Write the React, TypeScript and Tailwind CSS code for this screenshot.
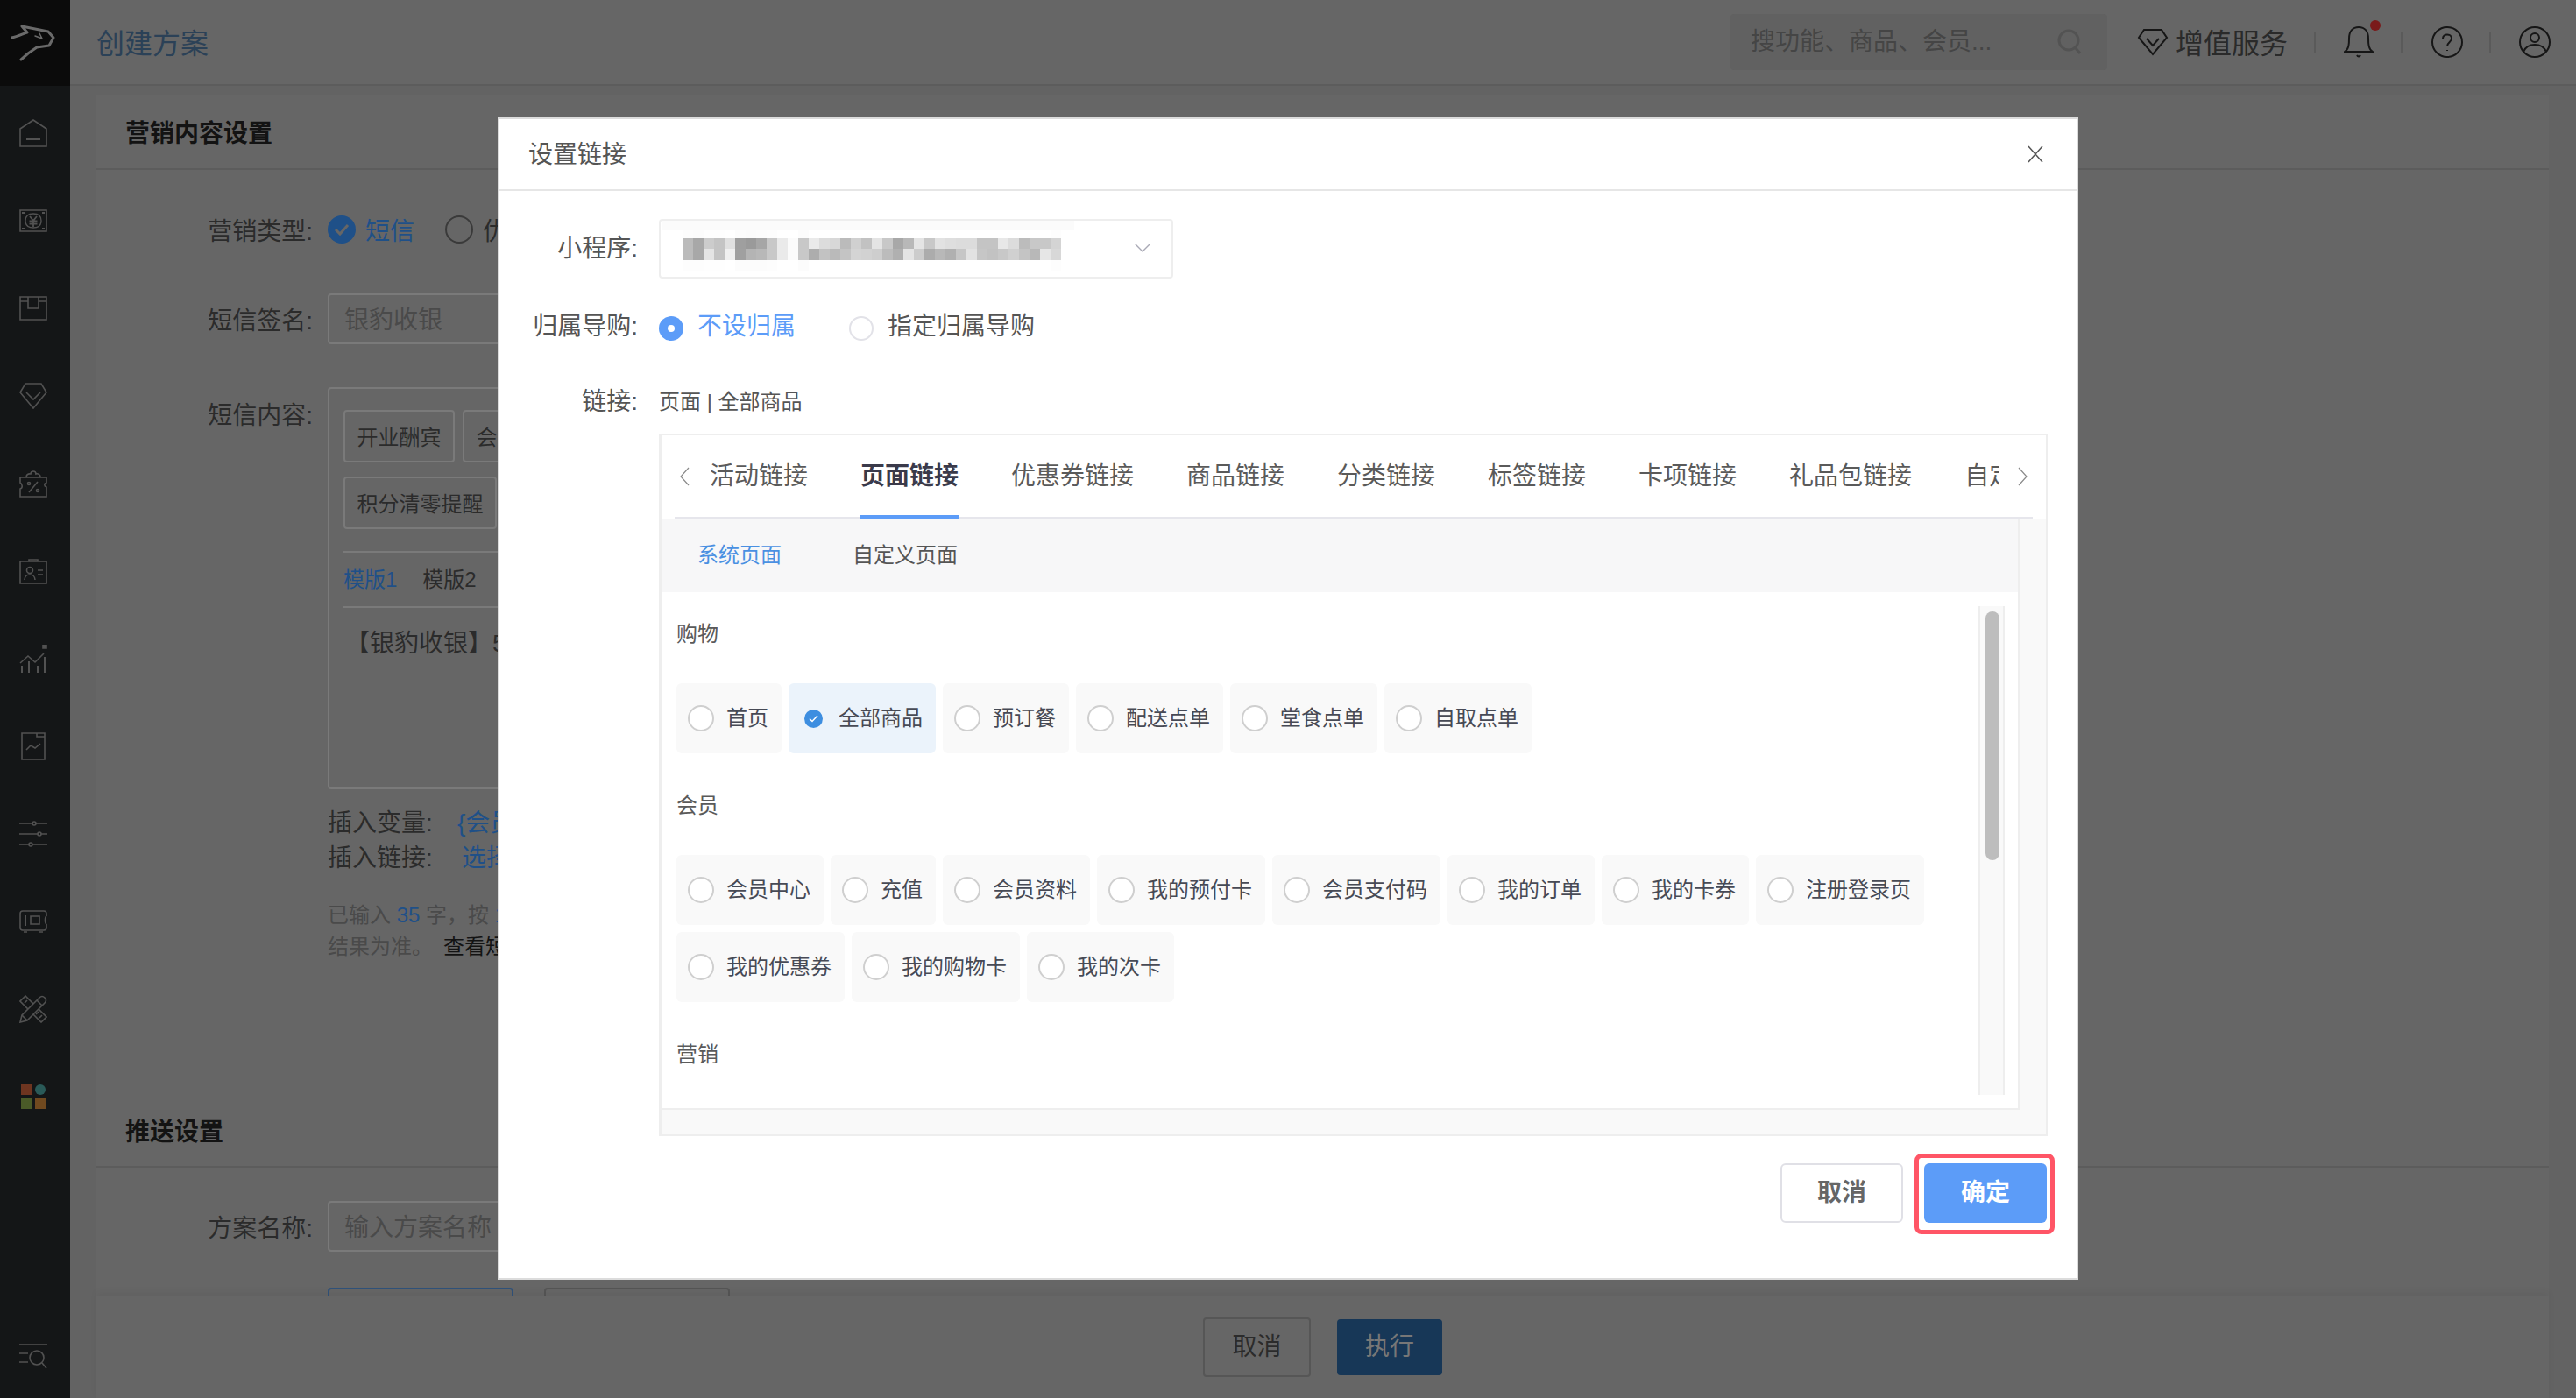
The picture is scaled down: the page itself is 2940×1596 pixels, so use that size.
import { ChevronDown } from "lucide-react"
import type { ReactNode } from "react"

const tabs = ["活动链接", "页面链接", "优惠券链接", "商品链接", "分类链接", "标签链接", "卡项链接", "礼品包链接", "自定义链接"]

const groups = [
  { title: "购物", items: ["首页", "全部商品", "预订餐", "配送点单", "堂食点单", "自取点单"] },
  { title: "会员", items: ["会员中心", "充值", "会员资料", "我的预付卡", "会员支付码", "我的订单", "我的卡券", "注册登录页", "我的优惠券", "我的购物卡", "我的次卡"] },
  { title: "营销", items: [] as string[] },
]

// the name in the select is pixelated in the picture
const mosaic = [
  "#fdfdfd #fcfcfc #fefefe #fefefe #fff #fcfcfc #fbfbfb #fcfcfc #fdfdfd #fff #fff #fcfcfc #fff #fff #fff #fff #fff #fff #fff #fff #fff #fff #fff #fff #fff #fff #fff #fff #fff #fff #fff #fff #fff #fff #fff #fdfdfd",
  "#bbb #a8a8a8 #ccc #c4c4c4 #e0e0e0 #9f9f9f #9a9a9a #a6a6a6 #c8c8c8 #eaeaea #fbfbfb #c8c8c8 #eaeaea #dcdcdc #d8d8d8 #bbb #d0d0d0 #c2c2c2 #e4e4e4 #c8c8c8 #a8a8a8 #b8b8b8 #e4e4e4 #c8c8c8 #e2e2e2 #dedede #dcdcdc #dcdcdc #c4c4c4 #c4c4c4 #e8e8e8 #dcdcdc #bcbcbc #c8c8c8 #c8c8c8 #d4d4d4",
  "#bbb #a8a8a8 #e4e4e4 #c4c4c4 #f0f0f0 #a0a0a0 #b4b4b4 #b8b8b8 #c8c8c8 #eaeaea #fbfbfb #c8c8c8 #adadad #c2c2c2 #bababa #c4c4c4 #d4d4d4 #d2d2d2 #cecece #bcbcbc #b0b0b0 #e4e4e4 #cccccc #acacac #b8b8b8 #b0b0b0 #c6c6c6 #e2e2e2 #c6c6c6 #c2c2c2 #c8c8c8 #d0d0d0 #c4c4c4 #b8b8b8 #e6e6e6 #d8d8d8",
  "#fdfdfd #fdfdfd #fefefe #fefefe #fff #fcfcfc #fcfcfc #fcfcfc #fdfdfd #fff #fff #fcfcfc #fff #fff #fff #fff #fff #fff #fff #fff #fff #fff #fff #fff #fff #fff #fff #fff #fff #fff #fff #fff #fff #fff #fff #fdfdfd",
]

function SideIcon({ h = 32, children }: { h?: number; children: ReactNode }) {
  return (
    <svg width="32" height={h} viewBox={`0 0 32 ${h}`} fill="none" stroke="#525252" strokeWidth="1.6">
      {children}
    </svg>
  )
}

const sideIcons: ReactNode[] = [
  <SideIcon>
    <path d="M1 31V11L16 1L31 11V31Z" />
    <path d="M8 23H24" strokeWidth="2" />
  </SideIcon>,
  <SideIcon h={26}>
    <path d="M1 1H31V25H1Z" />
    <path d="M3 4H6M26 4H29M3 22H6M26 22H29" strokeWidth="2" />
    <path d="M7 13C7 8 10 5 16 5C22 5 25 8 25 13C25 18 22 21 16 21C10 21 7 18 7 13Z" strokeWidth="1.4" />
    <path d="M12 8L16 13L20 8M16 13V20M11.500 13.500H20.500M11.500 16.500H20.500" strokeWidth="1.8" />
  </SideIcon>,
  <SideIcon h={28}>
    <path d="M1 1H31V27H1Z" />
    <path d="M1 6H10M22 6H31M10 1V14H22V1" />
  </SideIcon>,
  <SideIcon h={30}>
    <path d="M7 1H25L31 11L16 29L1 11Z" />
    <path d="M8 11L16 19L24 11" />
  </SideIcon>,
  <SideIcon>
    <path d="M1 9H31V15C28 16 28 19 31 20V31H1V22C4 21 4 17 1 15Z" />
    <path d="M8 8C9 4 12 5 13 5C13 1 19 1 19 5C21 4 24 6 24 8" />
    <path d="M11 26L21 14" />
    <circle cx="11" cy="16" r="1.500" />
    <circle cx="21" cy="24" r="1.500" />
  </SideIcon>,
  <SideIcon h={29}>
    <path d="M1 3H31V28H1Z" />
    <path d="M11 3V1H21V3" />
    <circle cx="12" cy="13" r="3.500" />
    <path d="M6 24C6 20 9 18 12 18C15 18 18 20 18 24M21 13H27M21 18H27" />
  </SideIcon>,
  <SideIcon h={33}>
    <path d="M1 21L10 13L18 20L28 10" />
    <path d="M3 32V24M11 32V19M21 32V24M29 32V14" strokeWidth="2" />
    <path d="M27 0H31V4H27Z" fill="#525252" />
  </SideIcon>,
  <SideIcon>
    <path d="M3 1H20L29 1V31H3Z" />
    <path d="M20 1V5H29" />
    <path d="M8 20L13 15L18 18L24 13" />
  </SideIcon>,
  <SideIcon h={30}>
    <path d="M0 3H32M0 15H32M0 27H32" strokeWidth="1.4" />
    <circle cx="17" cy="3" r="2" fill="#141617" />
    <circle cx="23" cy="15" r="2" fill="#141617" />
    <circle cx="13" cy="27" r="2" fill="#141617" />
  </SideIcon>,
  <SideIcon h={26}>
    <path d="M31 7V4C31 2 30 1 28 1H4C2 1 1 2 1 4V20C1 22 2 23 4 23H28C30 23 31 22 31 20V16M31 7C29 8 29 15 31 16" />
    <path d="M7 6V18" strokeWidth="2" />
    <path d="M13 7H23V16H13Z" />
    <path d="M5 25H9M23 25H27" />
  </SideIcon>,
  <SideIcon>
    <path d="M7 1L1 7L25 31L31 25Z" />
    <path d="M9 6L6 9M22 19L19 22M26 23L23 26" />
    <path d="M1 31L3 23L23 3C25 1 27 1 29 3C31 5 31 7 29 9L9 29Z" fill="#141617" />
    <path d="M3 23L9 29M20 6L26 12" />
  </SideIcon>,
]

function Label({ children, className }: { children: ReactNode; className?: string }) {
  return <div className={`w-[247px] shrink-0 text-right text-[#2b2b2b] ${className ?? ""}`}>{children}:</div>
}

function Background() {
  return (
    <div className="flex h-full w-full bg-[#636363]">
      <aside className="flex w-[80px] shrink-0 flex-col items-center bg-[#141617]">
        <div className="flex h-[98px] w-full items-center justify-center bg-[#0b0b0b] pr-[4px]">
          <svg width="52" height="42" viewBox="0 0 52 42" fill="none" stroke="#6a6a6a" strokeWidth="3" strokeLinejoin="round" strokeLinecap="round">
            <path d="M1 15C8 14 13 11 19 9L13 2L28 5L43 8L49 15L44 24L30 26L20 33L12 40" />
            <path d="M28 13L36 16L33 10" strokeWidth="1.5" />
          </svg>
        </div>
        <div className="flex flex-col items-center pr-[4px] pt-1">
          {sideIcons.map((icon, i) => (
            <div key={i} className="flex h-[100px] items-center justify-center">
              {icon}
            </div>
          ))}
          <div className="flex h-[100px] items-center justify-center">
            <div className="grid grid-cols-[12px_12px] gap-x-[4px] gap-y-[4px]">
              <div className="h-3 bg-[#6e3520]" />
              <div className="h-3 rounded-full bg-[#2a5a58]" />
              <div className="h-3 bg-[#4a5a28]" />
              <div className="h-3 bg-[#70491f]" />
            </div>
          </div>
        </div>
        <div className="mt-auto pb-[32px] pr-[4px]">
          <svg width="32" height="30" viewBox="0 0 32 30" fill="none" stroke="#525252" strokeWidth="1.6">
            <path d="M0 1H32M0 11H10M0 21H10" />
            <circle cx="20" cy="16" r="8" />
            <path d="M26 22L31 28" />
          </svg>
        </div>
      </aside>

      <div className="flex min-w-0 flex-1 flex-col">
        <header className="flex h-[98px] shrink-0 items-center border-b-2 border-[#5c5c5c] bg-[#666] pr-[29px]">
          <div className="ml-[30px] pt-[3px] text-[32px] text-[#2b4157]">创建方案</div>
          <div className="ml-auto flex h-[64px] w-[430px] items-center justify-between rounded bg-[#616161] pl-[23px] pr-[28px] text-[28px] text-[#454545]">
            <span>搜功能、商品、会员...</span>
            <svg width="30" height="32" viewBox="0 0 30 32" fill="none" stroke="#535353" strokeWidth="3">
              <circle cx="14" cy="14" r="11" />
              <path d="M22 23L27 29" />
            </svg>
          </div>
          <svg className="ml-[34px]" width="36" height="32" viewBox="0 0 36 32" fill="none" stroke="#161616" strokeWidth="2">
            <path d="M8 2H28L34 11L18 30L2 11Z" />
            <path d="M11 12L18 20L25 12" />
          </svg>
          <span className="ml-[8px] pt-[3px] text-[32px] text-[#2a2a2a]">增值服务</span>
          <div className="ml-[30px] h-[24px] w-[2px] bg-[#5a5a5a]" />
          <div className="relative ml-[32px] h-[36px] w-[34px]">
            <svg width="34" height="36" viewBox="0 0 34 36" fill="none" stroke="#161616" strokeWidth="2">
              <path d="M1 29H33C28 26 28 20 28 14C28 6 24 1 17 1C10 1 6 6 6 14C6 20 6 26 1 29Z" />
              <path d="M15 33C16 35 18 35 19 33" />
            </svg>
            <div className="absolute -right-[8px] -top-[7px] h-[12px] w-[12px] rounded-full bg-[#7a1a1a]" />
          </div>
          <div className="ml-[31px] h-[24px] w-[2px] bg-[#5a5a5a]" />
          <svg className="ml-[33px]" width="36" height="36" viewBox="0 0 36 36" fill="none" stroke="#161616" strokeWidth="2">
            <circle cx="18" cy="18" r="17" />
            <path d="M13 14C13 8 23 8 23 14C23 18 18 18 18 23" />
            <path d="M18 27V28" />
          </svg>
          <div className="ml-[30px] h-[24px] w-[2px] bg-[#5a5a5a]" />
          <svg className="ml-[32px]" width="36" height="36" viewBox="0 0 36 36" fill="none" stroke="#161616" strokeWidth="2">
            <circle cx="18" cy="18" r="17" />
            <circle cx="18" cy="13" r="5" />
            <path d="M5 29C8 22 13 21 18 21C23 21 28 22 31 29" />
          </svg>
        </header>

        <main className="relative ml-[30px] mr-[31px] flex min-h-0 flex-1 flex-col pt-[10px]">
          <div className="min-h-0 flex-1 overflow-hidden bg-[#666] text-[28px] text-[#2b2b2b]">
            <div className="flex h-[86px] items-center border-b-2 border-[#5c5c5c] pl-[33px] pt-[6px] font-bold text-[#131313]">营销内容设置</div>

            <div className="mt-[39px] flex h-[58px] items-center gap-[17px]">
              <Label className="pt-[6px]">营销类型</Label>
              <div className="flex h-[32px] w-[32px] items-center justify-center rounded-full bg-[#1f5088]">
                <svg width="20" height="16" viewBox="0 0 20 16" fill="none" stroke="#666" strokeWidth="3">
                  <path d="M3 8L8 13L17 3" />
                </svg>
              </div>
              <span className="-ml-[6px] pt-[6px] text-[#1f5088]">短信</span>
              <div className="ml-[18px] h-[32px] w-[32px] rounded-full border-2 border-[#3a3a3a]" />
              <span className="-ml-[6px] pt-[6px]">优惠券</span>
            </div>

            <div className="mt-[44px] flex h-[58px] items-center gap-[17px]">
              <Label className="pt-[6px]">短信签名</Label>
              <div className="flex h-full w-[500px] items-center rounded border-2 border-[#7a7a7a] px-[17px] pt-[4px] text-[#4a4a4a]">银豹收银</div>
            </div>

            <div className="mt-[49px] flex gap-[17px]">
              <Label className="pt-[3px] leading-[60px]">短信内容</Label>
              <div className="h-[459px] w-[700px] rounded border-2 border-[#7a7a7a] px-[16px] pt-[24px]">
                <div className="flex gap-[9px] text-[24px]">
                  <div className="flex h-[60px] w-[127px] items-center justify-center rounded border-2 border-[#7a7a7a] pt-[3px]">开业酬宾</div>
                  <div className="flex h-[60px] w-[127px] items-center justify-center rounded border-2 border-[#7a7a7a] pt-[3px]">会员关怀</div>
                </div>
                <div className="mt-[16px] flex h-[60px] w-[175px] items-center justify-center rounded border-2 border-[#7a7a7a] pt-[3px] text-[24px]">积分清零提醒</div>
                <div className="mt-[25px] flex h-[65px] items-center gap-[29px] border-y-2 border-[#7a7a7a] text-[24px]">
                  <span className="text-[#1f5088]">模版1</span>
                  <span>模版2</span>
                </div>
                <div className="mt-[20px] whitespace-nowrap pl-[2px]">【银豹收银】5周年庆</div>
              </div>
            </div>

            <div className="ml-[264px] mt-[19px] leading-[40px]">
              <div className="flex">
                <span className="w-[148px]">插入变量:</span>
                <span className="text-[#1f5088]">{"{会员姓名}"}</span>
              </div>
              <div className="flex">
                <span className="w-[153px]">插入链接:</span>
                <span className="text-[#1f5088]">选择链接</span>
              </div>
            </div>
            <div className="ml-[264px] mt-[27px] text-[24px] leading-[36px] text-[#4a4a4a]">
              <div>
                已输入 <span className="text-[#1f5088]">35</span> 字，按 <span className="text-[#1f5088]">1</span>
              </div>
              <div>
                结果为准。<span className="ml-[12px] text-[#131313]">查看短信</span>
              </div>
            </div>

            <div className="mt-[150px] flex h-[84px] items-center border-b-2 border-[#5c5c5c] pl-[33px] pt-[5px] font-bold text-[#131313]">推送设置</div>
            <div className="mt-[38px] flex h-[58px] items-center gap-[17px]">
              <Label className="pt-[6px]">方案名称</Label>
              <div className="flex h-full w-[500px] items-center rounded border-2 border-[#7a7a7a] px-[17px] pt-[4px] text-[#4a4a4a]">输入方案名称</div>
            </div>
            <div className="ml-[264px] mt-[41px] flex gap-[35px]">
              <div className="h-[58px] w-[212px] rounded border-2 border-[#30527a]" />
              <div className="h-[58px] w-[212px] rounded border-2 border-[#555]" />
            </div>
          </div>
          <div className="flex h-[117px] shrink-0 items-center justify-center gap-[30px] bg-[#666] text-[28px] shadow-[0_-4px_8px_rgba(0,0,0,0.05)]">
            <div className="flex h-[68px] w-[123px] items-center justify-center rounded border-2 border-[#565656] text-[#2b2b2b]">取消</div>
            <div className="flex h-[64px] w-[120px] items-center justify-center rounded bg-[#173757] text-[#777]">执行</div>
          </div>
        </main>
      </div>
    </div>
  )
}

function Radio({ checked }: { checked: boolean }) {
  if (checked) {
    return (
      <div className="flex h-[30px] w-[30px] shrink-0 items-center justify-center">
        <div className="flex h-[21px] w-[21px] items-center justify-center rounded-full bg-[#3d8ee0]">
          <svg width="13" height="11" viewBox="0 0 13 11" fill="none" stroke="#fff" strokeWidth="1.500">
            <path d="M2 5.500L5 8.500L11 2" />
          </svg>
        </div>
      </div>
    )
  }
  return <div className="h-[30px] w-[30px] shrink-0 rounded-full border-2 border-[#cfcfcf] bg-white" />
}

function PageOption({ name, checked }: { name: string; checked: boolean }) {
  return (
    <div className={`flex h-20 items-center gap-[14px] rounded-md pl-[13px] pr-[15px] text-[24px] text-[#474a55] ${checked ? "bg-[#ebf3fb]" : "bg-[#f9f9f9]"}`}>
      <Radio checked={checked} />
      <span>{name}</span>
    </div>
  )
}

function FieldLabel({ children }: { children: ReactNode }) {
  return <div className="w-[158px] shrink-0 text-right text-[#555]">{children}:</div>
}

function Chevron({ dir }: { dir: "left" | "right" }) {
  return (
    <svg width="11" height="22" viewBox="0 0 11 22" fill="none" stroke="#8a8a8a" strokeWidth="1.200">
      <path d={dir === "left" ? "M10 1L1 11L10 21" : "M1 1L10 11L1 21"} />
    </svg>
  )
}

function LinkDialog() {
  return (
    <div className="flex h-[1327px] w-[1804px] flex-col border-2 border-[#dcdcdc] bg-white text-[28px] text-[#555]">
      <div className="flex h-[82px] shrink-0 items-center justify-between border-b-2 border-[#e6e6e6] pl-[33px] pr-[38px]">
        <span className="pt-[2px]">设置链接</span>
        <svg width="18" height="20" viewBox="0 0 18 20" fill="none" stroke="#555" strokeWidth="1.500">
          <path d="M1 1L17 19M17 1L1 19" />
        </svg>
      </div>

      <div className="mt-[32px] flex h-[68px] items-center gap-[24px]">
        <FieldLabel>小程序</FieldLabel>
        <div className="relative flex h-full w-[587px] items-center rounded border-2 border-[#eee] pl-[25px]">
          <div className="absolute left-[2px] top-0 h-[11px] w-[470px] bg-[#fbfbfb]" />
          <div className="flex flex-col">
            {mosaic.map((row, r) => (
              <div key={r} className="flex">
                {row.split(" ").map((color, c) => (
                  <div key={c} className="h-[12.500px] w-[12px]" style={{ backgroundColor: color }} />
                ))}
              </div>
            ))}
          </div>
          <ChevronDown size={32} strokeWidth={1} className="absolute right-[17px] top-[15px] text-[#a9a9b5]" />
        </div>
      </div>

      <div className="mt-[35px] flex h-[40px] items-center gap-[24px]">
        <FieldLabel>归属导购</FieldLabel>
        <div className="mt-1 flex h-[28px] w-[28px] items-center justify-center rounded-full bg-[#5c9cf8]">
          <div className="h-[8px] w-[8px] rounded-full bg-white" />
        </div>
        <span className="-ml-[8px] text-[#5c9cf8]">不设归属</span>
        <div className="ml-[37px] mt-1 h-[28px] w-[28px] rounded-full border-2 border-[#e2e2e8]" />
        <span className="-ml-[8px]">指定归属导购</span>
      </div>

      <div className="mt-[46px] flex h-[40px] items-center gap-[24px]">
        <FieldLabel>链接</FieldLabel>
        <span className="text-[24px]">页面 | 全部商品</span>
      </div>

      <div className="ml-[182px] mt-[16px] flex h-[802px] w-[1585px] flex-col border-2 border-l-[3px] border-[#eee] bg-[#f9f9f9]">
        <div className="flex h-[95px] shrink-0 bg-white pl-[15px] pr-[15px]">
          <div className="flex h-full w-full shadow-[inset_0_-2px_0_#e6e6ec]">
            <div className="flex w-[40px] shrink-0 items-center pl-[6px] pb-[2px]">
              <Chevron dir="left" />
            </div>
            <div className="flex h-full w-[1471px] gap-[60px] overflow-hidden">
              {tabs.map((tab) => (
                <div
                  key={tab}
                  className={`flex h-full shrink-0 items-center whitespace-nowrap border-b-4 pt-[3px] ${tab === "页面链接" ? "border-[#5c9cf8] font-bold text-[#3a3a4a]" : "border-transparent text-[#5a5a5a]"}`}
                >
                  {tab}
                </div>
              ))}
            </div>
            <div className="flex flex-1 items-center pl-[22px] pb-[2px]">
              <Chevron dir="right" />
            </div>
          </div>
        </div>

        <div className="flex h-[675px] w-[1550px] shrink-0 flex-col border-b-2 border-r-2 border-[#eee] bg-white">
          <div className="flex h-[84px] shrink-0 items-center gap-[81px] bg-[#f7f7f8] pl-[41px] text-[24px]">
            <span className="text-[#4a90e2]">系统页面</span>
            <span className="text-[#555]">自定义页面</span>
          </div>
          <div className="flex min-h-0 flex-1">
            <div className="min-w-0 flex-1 overflow-hidden pl-[17px] pr-[8px] pt-[24px]">
              {groups.map((group, g) => (
                <div key={group.title} className={g > 0 ? "mt-[36px]" : ""}>
                  <div className="mb-[32px] text-[24px] leading-[48px] text-[#5a5a5a]">{group.title}</div>
                  <div className="flex flex-wrap gap-2">
                    {group.items.map((item) => (
                      <PageOption key={item} name={item} checked={item === "全部商品"} />
                    ))}
                  </div>
                </div>
              ))}
            </div>
            <div className="mb-[15px] mr-[15px] mt-[16px] w-[30px] shrink-0 border-x-2 border-[#eee] bg-[#f9f9f9] pl-[6px] pt-[6px]">
              <div className="h-[284px] w-[16px] rounded-full bg-[#bdbdbd]" />
            </div>
          </div>
        </div>
      </div>

      <div className="mt-[31px] flex justify-end gap-[24px] pr-[34px] font-bold">
        <div className="flex h-[68px] w-[140px] items-center justify-center rounded-md border-2 border-[#e0e0e6] text-[#666]">取消</div>
        <div className="relative flex h-[68px] w-[140px] items-center justify-center rounded-md bg-[#5c9cf8] text-white">
          确定
          <div className="absolute -bottom-[13px] -left-[11px] -right-[9px] -top-[11px] rounded-lg border-[5px] border-[#ff5566]" />
        </div>
      </div>
    </div>
  )
}

export default function App() {
  return (
    <div className="relative h-[1596px] w-[2940px] overflow-hidden font-['Liberation_Sans','Noto_Sans_CJK_SC',sans-serif]">
      <Background />
      <div className="absolute inset-0 flex items-start justify-center pt-[134px]">
        <LinkDialog />
      </div>
    </div>
  )
}
